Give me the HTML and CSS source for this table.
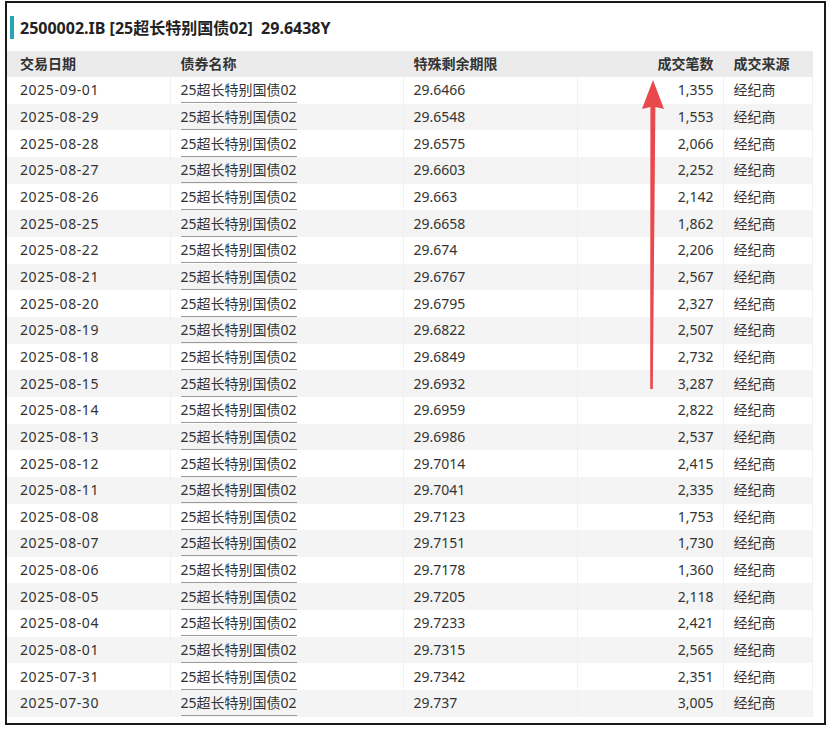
FILE: index.html
```html
<!DOCTYPE html>
<html lang="zh-CN">
<head>
<meta charset="utf-8">
<title>2500002.IB</title>
<link rel="stylesheet" href="styles.css">
</head>
<body>
<div class="frame">
  <div class="title">
    <span class="bar"></span>
    <span class="title-text">2500002.IB [25超长特别国债02]&nbsp; 29.6438Y</span>
  </div>
  <table class="grid">
    <colgroup>
      <col class="c1"><col class="c2"><col class="c3"><col class="c4"><col class="c5">
    </colgroup>
    <thead>
      <tr><th class="d">交易日期</th><th>债券名称</th><th>特殊剩余期限</th><th class="num">成交笔数</th><th>成交来源</th></tr>
    </thead>
    <tbody>
      <tr><td class="d date">2025-09-01</td><td><span class="link">25超长特别国债02</span></td><td>29.6466</td><td class="num">1,355</td><td>经纪商</td></tr>
      <tr><td class="d date">2025-08-29</td><td><span class="link">25超长特别国债02</span></td><td>29.6548</td><td class="num">1,553</td><td>经纪商</td></tr>
      <tr><td class="d date">2025-08-28</td><td><span class="link">25超长特别国债02</span></td><td>29.6575</td><td class="num">2,066</td><td>经纪商</td></tr>
      <tr><td class="d date">2025-08-27</td><td><span class="link">25超长特别国债02</span></td><td>29.6603</td><td class="num">2,252</td><td>经纪商</td></tr>
      <tr><td class="d date">2025-08-26</td><td><span class="link">25超长特别国债02</span></td><td>29.663</td><td class="num">2,142</td><td>经纪商</td></tr>
      <tr><td class="d date">2025-08-25</td><td><span class="link">25超长特别国债02</span></td><td>29.6658</td><td class="num">1,862</td><td>经纪商</td></tr>
      <tr><td class="d date">2025-08-22</td><td><span class="link">25超长特别国债02</span></td><td>29.674</td><td class="num">2,206</td><td>经纪商</td></tr>
      <tr><td class="d date">2025-08-21</td><td><span class="link">25超长特别国债02</span></td><td>29.6767</td><td class="num">2,567</td><td>经纪商</td></tr>
      <tr><td class="d date">2025-08-20</td><td><span class="link">25超长特别国债02</span></td><td>29.6795</td><td class="num">2,327</td><td>经纪商</td></tr>
      <tr><td class="d date">2025-08-19</td><td><span class="link">25超长特别国债02</span></td><td>29.6822</td><td class="num">2,507</td><td>经纪商</td></tr>
      <tr><td class="d date">2025-08-18</td><td><span class="link">25超长特别国债02</span></td><td>29.6849</td><td class="num">2,732</td><td>经纪商</td></tr>
      <tr><td class="d date">2025-08-15</td><td><span class="link">25超长特别国债02</span></td><td>29.6932</td><td class="num">3,287</td><td>经纪商</td></tr>
      <tr><td class="d date">2025-08-14</td><td><span class="link">25超长特别国债02</span></td><td>29.6959</td><td class="num">2,822</td><td>经纪商</td></tr>
      <tr><td class="d date">2025-08-13</td><td><span class="link">25超长特别国债02</span></td><td>29.6986</td><td class="num">2,537</td><td>经纪商</td></tr>
      <tr><td class="d date">2025-08-12</td><td><span class="link">25超长特别国债02</span></td><td>29.7014</td><td class="num">2,415</td><td>经纪商</td></tr>
      <tr><td class="d date">2025-08-11</td><td><span class="link">25超长特别国债02</span></td><td>29.7041</td><td class="num">2,335</td><td>经纪商</td></tr>
      <tr><td class="d date">2025-08-08</td><td><span class="link">25超长特别国债02</span></td><td>29.7123</td><td class="num">1,753</td><td>经纪商</td></tr>
      <tr><td class="d date">2025-08-07</td><td><span class="link">25超长特别国债02</span></td><td>29.7151</td><td class="num">1,730</td><td>经纪商</td></tr>
      <tr><td class="d date">2025-08-06</td><td><span class="link">25超长特别国债02</span></td><td>29.7178</td><td class="num">1,360</td><td>经纪商</td></tr>
      <tr><td class="d date">2025-08-05</td><td><span class="link">25超长特别国债02</span></td><td>29.7205</td><td class="num">2,118</td><td>经纪商</td></tr>
      <tr><td class="d date">2025-08-04</td><td><span class="link">25超长特别国债02</span></td><td>29.7233</td><td class="num">2,421</td><td>经纪商</td></tr>
      <tr><td class="d date">2025-08-01</td><td><span class="link">25超长特别国债02</span></td><td>29.7315</td><td class="num">2,565</td><td>经纪商</td></tr>
      <tr><td class="d date">2025-07-31</td><td><span class="link">25超长特别国债02</span></td><td>29.7342</td><td class="num">2,351</td><td>经纪商</td></tr>
      <tr><td class="d date">2025-07-30</td><td><span class="link">25超长特别国债02</span></td><td>29.737</td><td class="num">3,005</td><td>经纪商</td></tr>
    </tbody>
  </table>
  <svg class="arrow" width="30" height="312" viewBox="0 0 30 312" aria-hidden="true">
    <path d="M12.2 309 L12.4 27 L4 29 L15 0 L26 29 L17.4 27 L14.8 309 Z" fill="#e9484c"/>
  </svg>
</div>
</body>
</html>
```
FILE: styles.css
```css
html, body {
  margin: 0;
  padding: 0;
  background: #ffffff;
}
body {
  font-family: "Noto Sans", "Noto Sans CJK SC", sans-serif;
  color: #333333;
  font-size: 14px;
}
.frame {
  position: relative;
  margin: 1px 0 0 5px;
  width: 817px;
  height: 720px;
  border: 2px solid #1a1a1a;
  background: #ffffff;
}
.title {
  display: flex;
  align-items: center;
  height: 48px;
  padding-left: 3px;
  box-sizing: border-box;
}
.bar {
  width: 4px;
  height: 23px;
  background: #2aa5b5;
  margin-right: 6px;
}
.title-text {
  font-size: 16px;
  font-weight: 700;
  color: #222222;
  white-space: pre;
}
.grid {
  border-collapse: collapse;
  table-layout: fixed;
  width: 805px;
}
.c1 { width: 163px; }
.c2 { width: 233px; }
.c3 { width: 174px; }
.c4 { width: 146px; }
.c5 { width: 89px; }
.grid th, .grid td {
  height: 26.67px;
  padding: 0 10px;
  text-align: left;
  white-space: nowrap;
  line-height: 20px;
  border-right: 1px solid #f0f0f0;
}
.grid th {
  height: 26px;
  background: #ebebeb;
  font-weight: 700;
  color: #333333;
  border-right-color: #ebebeb;
}
.grid .d { padding-left: 13px; }
.grid .date { letter-spacing: 0.6px; }
.grid .num { text-align: right; padding-right: 9px; }
.grid tbody tr:nth-child(even) td { background: #f4f4f4; }
.link {
  display: inline-block;
  padding-top: 3px;
  padding-bottom: 2px;
  border-bottom: 1px solid #9a9a9a;
  line-height: 20px;
}
.arrow {
  position: absolute;
  left: 631px;
  top: 77px;
}
```
